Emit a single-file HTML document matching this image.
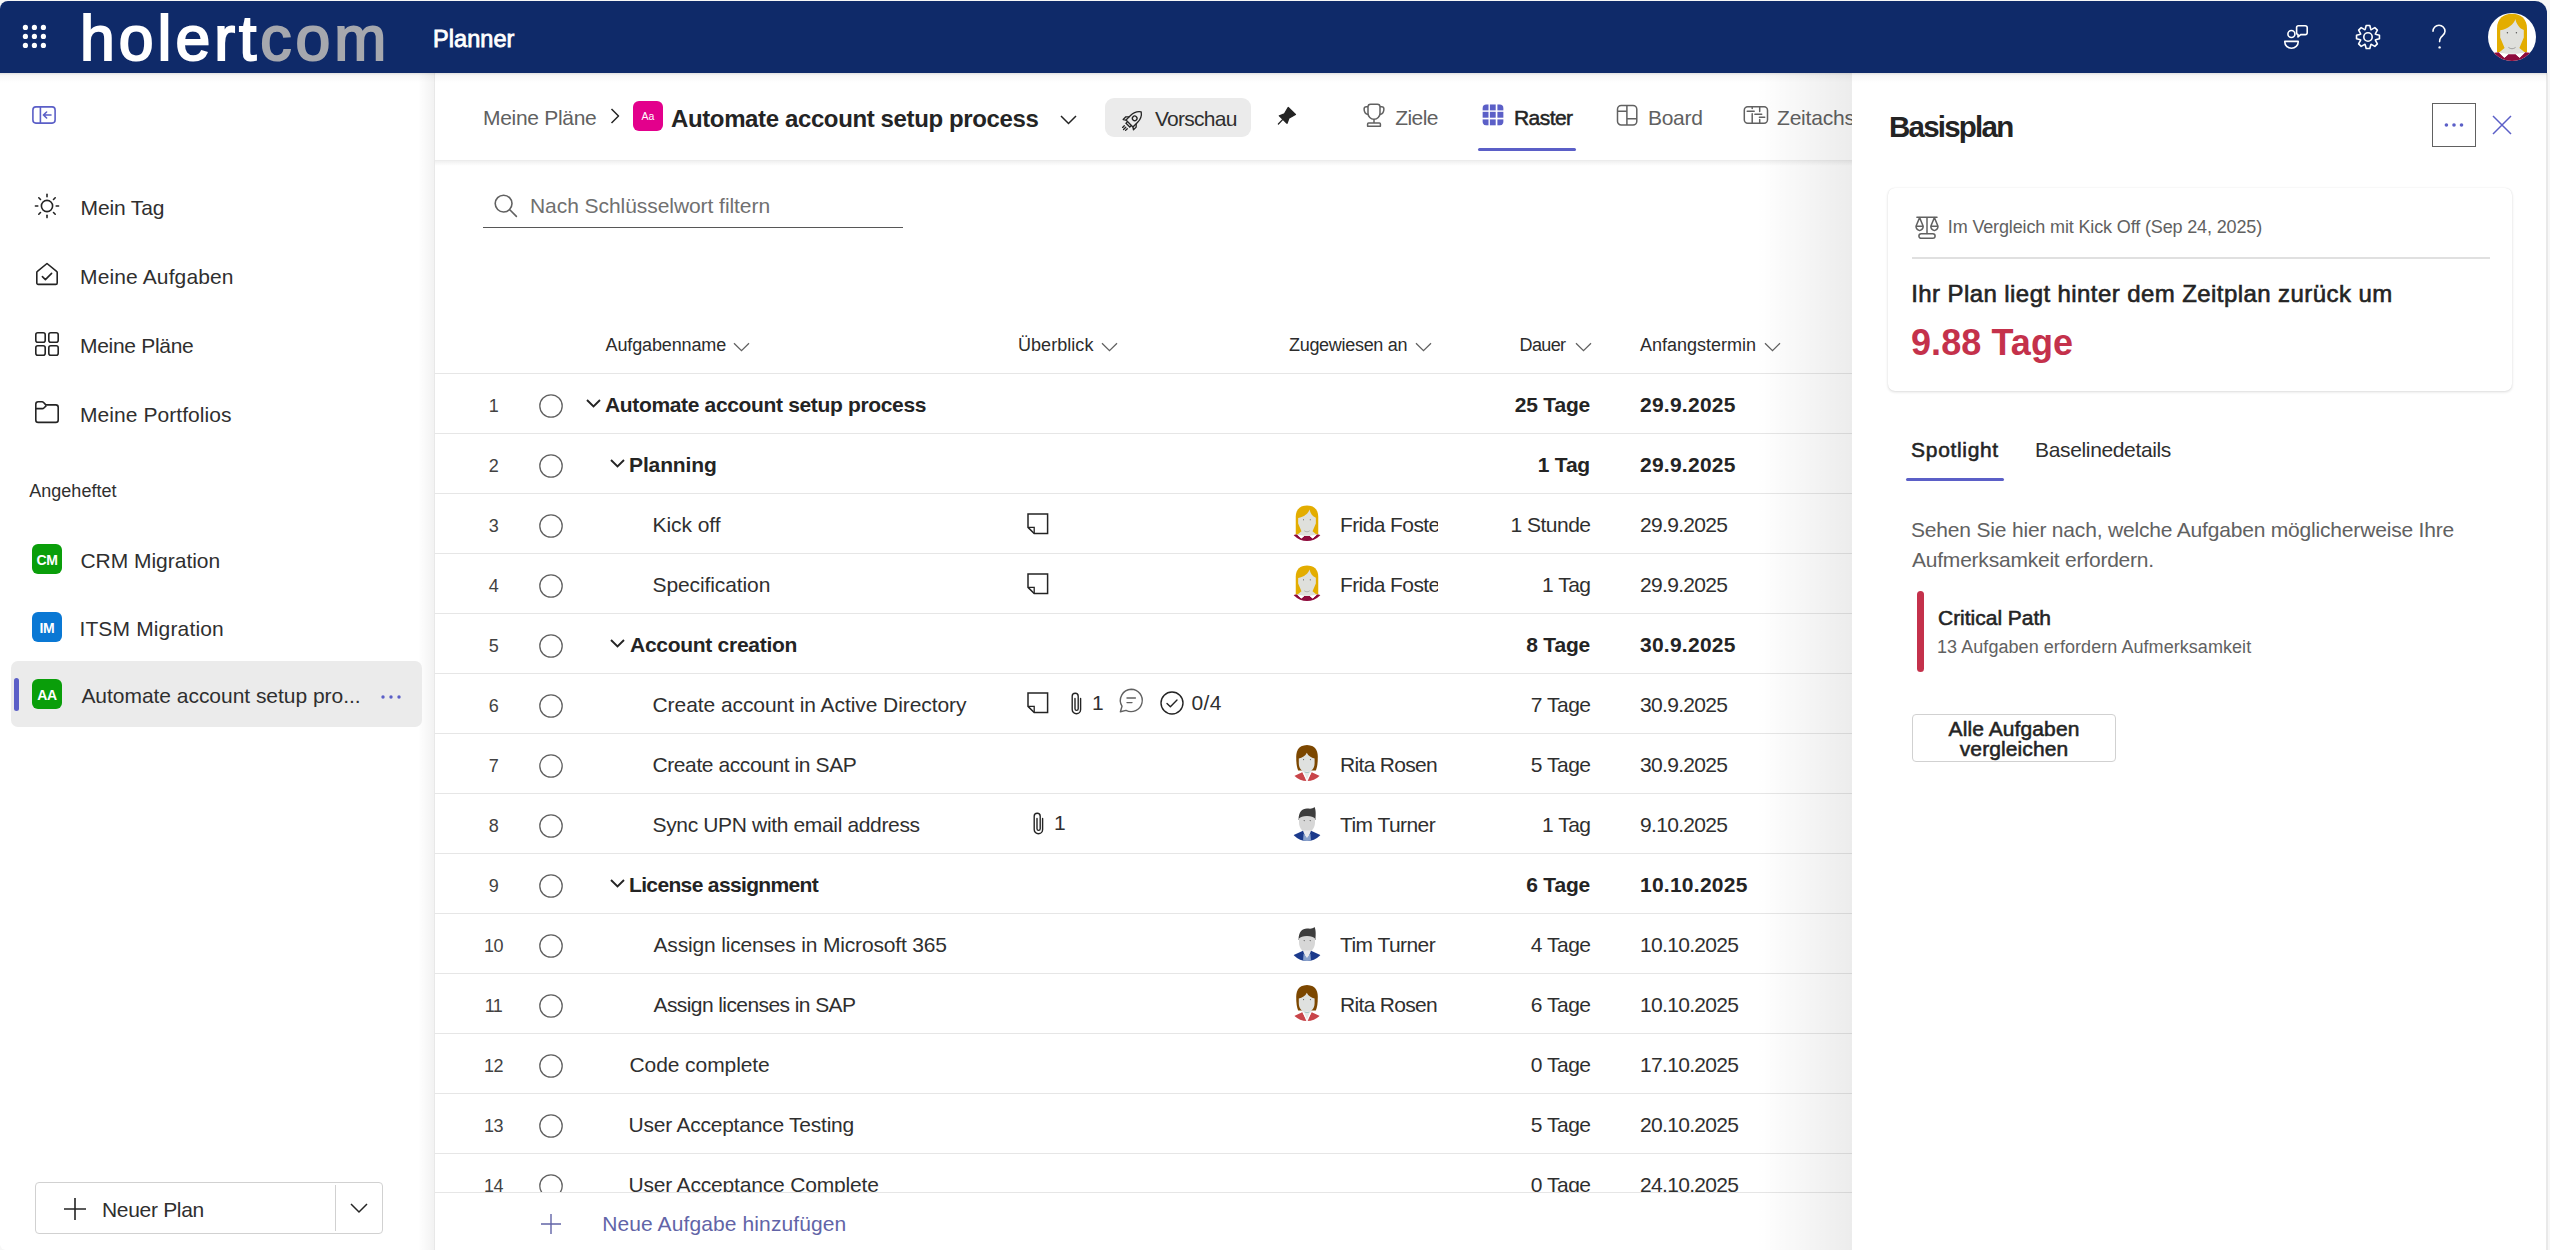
<!DOCTYPE html><html><head><meta charset="utf-8"><title>Planner</title><style>
html,body{margin:0;padding:0;width:2550px;height:1250px;overflow:hidden;background:#f7f7f7;font-family:"Liberation Sans",sans-serif;}
.a{position:absolute;box-sizing:border-box;}
svg.a{overflow:visible;}
.t{position:absolute;white-space:nowrap;line-height:1;}
</style></head><body>
<div class="a" style="left:0px;top:1px;width:2547px;height:1249px;background:#fff;border-radius:8px 12px 10px 6px;"></div>
<div class="a" style="left:0px;top:1px;width:2547px;height:72px;background:#0f2a69;border-radius:8px 12px 0 0;"></div>
<svg class="a" style="left:0px;top:0px;" width="70" height="73" viewBox="0 0 70 73" fill="none"><circle cx="25.4" cy="27.4" r="2.6" fill="#fff"/><circle cx="25.4" cy="36.4" r="2.6" fill="#fff"/><circle cx="25.4" cy="45.4" r="2.6" fill="#fff"/><circle cx="34.4" cy="27.4" r="2.6" fill="#fff"/><circle cx="34.4" cy="36.4" r="2.6" fill="#fff"/><circle cx="34.4" cy="45.4" r="2.6" fill="#fff"/><circle cx="43.4" cy="27.4" r="2.6" fill="#fff"/><circle cx="43.4" cy="36.4" r="2.6" fill="#fff"/><circle cx="43.4" cy="45.4" r="2.6" fill="#fff"/></svg>
<div class="t" id="logo" style="left:80.0px;top:7.1px;font-size:62.5px;font-weight:400;color:#fff;letter-spacing:4.0px;-webkit-text-stroke:2px #fff;">holert<span style="color:#a6a8ae;-webkit-text-stroke:2px #a6a8ae">com</span></div>
<div class="t" id="planner" style="left:433.0px;top:27.6px;font-size:23.5px;font-weight:400;color:#fff;letter-spacing:0.066px;-webkit-text-stroke:0.8px #fff;">Planner</div>
<svg class="a" style="left:2284px;top:25px;" width="24" height="24" viewBox="0 0 24 24" fill="none"><circle cx="7.4" cy="9" r="3.5" stroke="#fff" stroke-width="1.6"/><path d="M0.8 16.4h13.4v0.6a6.7 6.2 0 0 1-13.4 0z" stroke="#fff" stroke-width="1.6" stroke-linejoin="round"/><path d="M14.4 0.8h7a1.8 1.8 0 0 1 1.8 1.8v5.2a1.8 1.8 0 0 1-1.8 1.8h-4.8l-2.6 2.4v-2.4a1.8 1.8 0 0 1-1.4-1.8V2.6a1.8 1.8 0 0 1 1.8-1.8z" stroke="#fff" stroke-width="1.6" stroke-linejoin="round"/></svg>
<svg class="a" style="left:2356px;top:25px;" width="24" height="24" viewBox="0 0 24 24" fill="none"><path d="M9.40 3.49 L10.19 0.54 L13.81 0.54 L14.60 3.49 L15.02 4.70 L16.18 4.14 L18.82 2.62 L21.38 5.18 L19.86 7.82 L19.30 8.98 L20.51 9.40 L23.46 10.19 L23.46 13.81 L20.51 14.60 L19.30 15.02 L19.86 16.18 L21.38 18.82 L18.82 21.38 L16.18 19.86 L15.02 19.30 L14.60 20.51 L13.81 23.46 L10.19 23.46 L9.40 20.51 L8.98 19.30 L7.82 19.86 L5.18 21.38 L2.62 18.82 L4.14 16.18 L4.70 15.02 L3.49 14.60 L0.54 13.81 L0.54 10.19 L3.49 9.40 L4.70 8.98 L4.14 7.82 L2.62 5.18 L5.18 2.62 L7.82 4.14 L8.98 4.70Z" stroke="#fff" stroke-width="1.6" stroke-linejoin="round"/><circle cx="12" cy="12" r="4.2" stroke="#fff" stroke-width="1.6"/></svg>
<svg class="a" style="left:2430px;top:25px;" width="18" height="24" viewBox="0 0 18 24" fill="none"><path d="M3 6.2a6 6 0 0 1 12 0c0 3.2-2.4 4.2-3.8 5.8c-1 1.2-1.6 2.4-1.6 4.6" stroke="#fff" stroke-width="1.6" stroke-linecap="round"/><circle cx="9.6" cy="22.4" r="1.2" fill="#fff"/></svg>
<svg class="a" style="left:2488px;top:13px;" width="48" height="48" viewBox="0 0 48 48" fill="none"><circle cx="24" cy="24" r="24" fill="#fff"/><clipPath id="wa248813"><circle cx="24" cy="24" r="24"/></clipPath><g clip-path="url(#wa248813)"><path d="M9 39.2V15.5C9 6 15 0.8 24 0.8S39 6 39 15.5V39.2z" fill="#e3ad00"/><path d="M27.4 5.9C26 11 20 16 12.2 17.2V24.5L16.6 35L11.4 39.2C16 41.4 32 41.4 36.6 39.2L31.4 35L35.8 24.5V17C31.5 15.4 28.4 11 27.4 5.9z" fill="#dfe0dc"/><path d="M0 48L2 41.6C5 40 8 39.3 10.8 39.3L16.4 44.8L20.3 41.2H27.7L31.6 44.8L37.2 39.3C40 39.3 43 40 46 41.6L48 48z" fill="#8e0b3c"/><path d="M10.8 39.3C14 40.5 17 41 20.3 41.2L16.4 44.8zM37.2 39.3C34 40.5 31 41 27.7 41.2L31.6 44.8z" fill="#fff"/><circle cx="19.4" cy="19.8" r="0.7" fill="#555"/><circle cx="28.4" cy="19.8" r="0.7" fill="#555"/><path d="M20.4 34.4c2.4 1.8 4.8 1.8 7.2 0" stroke="#9a9a9a" stroke-width="0.9"/></g></svg>
<div class="a" style="left:418px;top:73px;width:16px;height:1177px;background:linear-gradient(to right,rgba(0,0,0,0),rgba(0,0,0,0.05));"></div>
<div class="a" style="left:434px;top:73px;width:1px;height:1177px;background:#e8e8e8;"></div>
<svg class="a" style="left:32px;top:106px;" width="24" height="18" viewBox="0 0 24 18" fill="none"><rect x="0.9" y="0.9" width="22.2" height="16.2" rx="3" stroke="#5b5fc7" stroke-width="1.6"/><path d="M8.4 1v16" stroke="#5b5fc7" stroke-width="1.6"/><path d="M19 9h-7.6M14.6 6l-3.2 3l3.2 3" stroke="#5b5fc7" stroke-width="1.6" stroke-linecap="round" stroke-linejoin="round"/></svg>
<svg class="a" style="left:35px;top:194px;" width="24" height="24" viewBox="0 0 24 24" fill="none"><circle cx="12" cy="12" r="5.6" stroke="#242424" stroke-width="1.6"/><path d="M21.20 12.00L23.60 12.00" stroke="#242424" stroke-width="1.6" stroke-linecap="round"/><path d="M18.51 18.51L20.20 20.20" stroke="#242424" stroke-width="1.6" stroke-linecap="round"/><path d="M12.00 21.20L12.00 23.60" stroke="#242424" stroke-width="1.6" stroke-linecap="round"/><path d="M5.49 18.51L3.80 20.20" stroke="#242424" stroke-width="1.6" stroke-linecap="round"/><path d="M2.80 12.00L0.40 12.00" stroke="#242424" stroke-width="1.6" stroke-linecap="round"/><path d="M5.49 5.49L3.80 3.80" stroke="#242424" stroke-width="1.6" stroke-linecap="round"/><path d="M12.00 2.80L12.00 0.40" stroke="#242424" stroke-width="1.6" stroke-linecap="round"/><path d="M18.51 5.49L20.20 3.80" stroke="#242424" stroke-width="1.6" stroke-linecap="round"/></svg>
<svg class="a" style="left:35px;top:262px;" width="24" height="24" viewBox="0 0 24 24" fill="none"><path d="M12 1.5L21.6 9.3c0.4 0.3 0.6 0.8 0.6 1.3V21c0 0.8-0.6 1.4-1.4 1.4H3.2c-0.8 0-1.4-0.6-1.4-1.4V10.6c0-0.5 0.2-1 0.6-1.3z" stroke="#242424" stroke-width="1.6" stroke-linejoin="round"/><path d="M7.4 14.6l3 3l6.2-6.2" stroke="#242424" stroke-width="1.6" stroke-linecap="round" stroke-linejoin="round"/></svg>
<svg class="a" style="left:35px;top:332px;" width="24" height="24" viewBox="0 0 24 24" fill="none"><rect x="0.8" y="0.8" width="9.4" height="9.4" rx="2" stroke="#242424" stroke-width="1.6"/><rect x="0.8" y="13.8" width="9.4" height="9.4" rx="2" stroke="#242424" stroke-width="1.6"/><rect x="13.8" y="0.8" width="9.4" height="9.4" rx="2" stroke="#242424" stroke-width="1.6"/><rect x="13.8" y="13.8" width="9.4" height="9.4" rx="2" stroke="#242424" stroke-width="1.6"/></svg>
<svg class="a" style="left:35px;top:401px;" width="24" height="22" viewBox="0 0 24 22" fill="none"><path d="M0.8 3.2c0-1.3 1-2.4 2.4-2.4h3.8c0.6 0 1.2 0.3 1.6 0.7l2.2 2.4h10c1.3 0 2.4 1 2.4 2.4V19c0 1.3-1 2.4-2.4 2.4H3.2c-1.3 0-2.4-1-2.4-2.4z" stroke="#242424" stroke-width="1.6" stroke-linejoin="round"/><path d="M0.8 7.6h6.6c0.6 0 1.1-0.2 1.5-0.6l2.4-2.4" stroke="#242424" stroke-width="1.6" stroke-linejoin="round"/></svg>
<div class="t" id="s1" style="left:80.6px;top:197.2px;font-size:21px;font-weight:400;color:#2f2f2f;letter-spacing:-0.151px;">Mein Tag</div>
<div class="t" id="s2" style="left:80.0px;top:266.2px;font-size:21px;font-weight:400;color:#2f2f2f;letter-spacing:0.134px;">Meine Aufgaben</div>
<div class="t" id="s3" style="left:80.0px;top:335.2px;font-size:21px;font-weight:400;color:#2f2f2f;letter-spacing:-0.3px;">Meine Pläne</div>
<div class="t" id="s4" style="left:80.0px;top:404.2px;font-size:21px;font-weight:400;color:#2f2f2f;letter-spacing:0.067px;">Meine Portfolios</div>
<div class="t" id="s5" style="left:29.2px;top:481.8px;font-size:18px;font-weight:400;color:#2f2f2f;letter-spacing:0.029px;">Angeheftet</div>
<div class="a" style="left:11px;top:661px;width:411px;height:66px;background:#ebebeb;border-radius:7px;"></div>
<div class="a" style="left:14px;top:678px;width:5px;height:33px;background:#5b5fc7;border-radius:3px;"></div>
<div class="a" style="left:32px;top:544px;width:30px;height:30px;background:#0a9e0a;border-radius:6px;"></div>
<div class="t" style="left:-53.0px;width:200px;text-align:center;top:552.6px;font-size:14px;font-weight:700;color:#fff;letter-spacing:-0.3px;">CM</div>
<div class="a" style="left:32px;top:612px;width:30px;height:30px;background:#0a78d4;border-radius:6px;"></div>
<div class="t" style="left:-53.0px;width:200px;text-align:center;top:620.6px;font-size:14px;font-weight:700;color:#fff;letter-spacing:-0.3px;">IM</div>
<div class="a" style="left:32px;top:679px;width:30px;height:30px;background:#0a9e0a;border-radius:6px;"></div>
<div class="t" style="left:-53.0px;width:200px;text-align:center;top:687.6px;font-size:14px;font-weight:700;color:#fff;letter-spacing:-0.3px;">AA</div>
<div class="t" id="s6" style="left:80.4px;top:550.2px;font-size:21px;font-weight:400;color:#2f2f2f;letter-spacing:-0.017px;">CRM Migration</div>
<div class="t" id="s7" style="left:79.4px;top:617.7px;font-size:21px;font-weight:400;color:#2f2f2f;letter-spacing:0.154px;">ITSM Migration</div>
<div class="t" id="s8" style="left:81.4px;top:685.2px;font-size:21px;font-weight:400;color:#2f2f2f;letter-spacing:-0.035px;">Automate account setup pro...</div>
<svg class="a" style="left:380px;top:692px;" width="24" height="10" viewBox="0 0 24 10" fill="none"><circle cx="3" cy="5" r="1.7" fill="#5b5fc7"/><circle cx="11" cy="5" r="1.7" fill="#5b5fc7"/><circle cx="19" cy="5" r="1.7" fill="#5b5fc7"/></svg>
<div class="a" style="left:35px;top:1182px;width:348px;height:52px;border:1px solid #d1d1d1;border-radius:4px;background:#fff;"></div>
<div class="a" style="left:335px;top:1185px;width:1px;height:46px;background:#d1d1d1;"></div>
<svg class="a" style="left:63px;top:1197px;" width="24" height="24" viewBox="0 0 24 24" fill="none"><path d="M12 1v22M1 12h22" stroke="#242424" stroke-width="1.6"/></svg>
<div class="t" id="s9" style="left:102.0px;top:1199.2px;font-size:21px;font-weight:400;color:#2f2f2f;letter-spacing:-0.312px;">Neuer Plan</div>
<svg class="a" style="left:350px;top:1203px;" width="18" height="10" viewBox="0 0 18 10" fill="none"><path d="M1 1l8 8l8-8" stroke="#242424" stroke-width="1.5"/></svg>
<div class="a" style="left:435px;top:160px;width:1417px;height:6px;background:linear-gradient(to bottom,rgba(0,0,0,0.07),rgba(0,0,0,0));"></div>
<div class="a" style="left:435px;top:160px;width:1417px;height:1px;background:#ececec;"></div>
<div class="t" id="bc1" style="left:483.0px;top:106.9px;font-size:21px;font-weight:400;color:#616161;letter-spacing:-0.3px;">Meine Pläne</div>
<svg class="a" style="left:610px;top:108px;" width="10" height="16" viewBox="0 0 10 16" fill="none"><path d="M1.5 1l7 7l-7 7" stroke="#242424" stroke-width="1.5" stroke-linejoin="round"/></svg>
<div class="a" style="left:633px;top:101px;width:30px;height:30px;background:#e3008c;border-radius:6px;"></div>
<div class="t" style="left:548.0px;width:200px;text-align:center;top:111.1px;font-size:10.5px;font-weight:400;color:#fff;">Aa</div>
<div class="t" id="bc2" style="left:671.0px;top:106.7px;font-size:24px;font-weight:700;color:#242424;letter-spacing:-0.378px;">Automate account setup process</div>
<svg class="a" style="left:1060px;top:115px;" width="17" height="10" viewBox="0 0 17 10" fill="none"><path d="M1 1l7.5 7.5l7.5-7.5" stroke="#242424" stroke-width="1.5"/></svg>
<div class="a" style="left:1105px;top:98px;width:146px;height:39px;background:#ebebeb;border-radius:9px;"></div>
<svg class="a" style="left:1119px;top:107px;" width="27" height="27" viewBox="0 0 27 27" fill="none"><g transform="rotate(45 13.5 13.5)"><path d="M8.6 17.8V11.4C8.6 6.6 10.6 3.2 13.5 1.2C16.4 3.2 18.4 6.6 18.4 11.4V17.8z" stroke="#242424" stroke-width="1.3" stroke-linejoin="round"/><circle cx="13.5" cy="10.4" r="2.3" stroke="#242424" stroke-width="1.3"/><path d="M8.6 13.2L6.2 15.6V19.4L8.6 17.8M18.4 13.2L20.8 15.6V19.4L18.4 17.8" stroke="#242424" stroke-width="1.3" stroke-linejoin="round"/><path d="M10.8 17.8v2.2h5.4v-2.2" stroke="#242424" stroke-width="1.3"/><path d="M11.4 23v2.4M13.5 23v3.2M15.6 23v2.4" stroke="#242424" stroke-width="1.3" stroke-linecap="round"/></g></svg>
<div class="t" id="bc3" style="left:1155.0px;top:108.2px;font-size:21px;font-weight:400;color:#2f2f2f;letter-spacing:-0.743px;">Vorschau</div>
<svg class="a" style="left:1276px;top:106px;" width="22" height="20" viewBox="0 0 22 20" fill="none"><path d="M12.2 1.6L19.4 8.4L12.8 12.2L11 17.2L3.4 9.8L8.4 8z" fill="#242424" stroke="#242424" stroke-width="1.4" stroke-linejoin="round"/><path d="M6.6 13.6L2.4 18" stroke="#242424" stroke-width="1.3" stroke-linecap="round"/></svg>
<svg class="a" style="left:1363px;top:103px;" width="22" height="24" viewBox="0 0 22 24" fill="none"><path d="M7.6 1.2h6.8a2.6 2.6 0 0 1 2.6 2.6v6.4a6 6 0 0 1-12 0V3.8a2.6 2.6 0 0 1 2.6-2.6z" stroke="#616161" stroke-width="1.5"/><path d="M5 3.8H3.4c-1.4 0-2.3 0.8-2.3 2.2c0 3 1.4 5 3.9 5.6M17 3.8h1.6c1.4 0 2.3 0.8 2.3 2.2c0 3-1.4 5-3.9 5.6" stroke="#616161" stroke-width="1.5"/><path d="M11 16.4v3.6" stroke="#616161" stroke-width="1.5"/><path d="M5.6 20h10.8c0.6 0 1 0.4 1 1v2.2H4.6V21c0-0.6 0.4-1 1-1z" stroke="#616161" stroke-width="1.5" stroke-linejoin="round"/></svg>
<div class="t" id="tb1" style="left:1395.2px;top:106.5px;font-size:21px;font-weight:400;color:#616161;letter-spacing:-0.55px;">Ziele</div>
<svg class="a" style="left:1482px;top:104px;" width="22" height="22" viewBox="0 0 22 22" fill="none"><clipPath id="rgc"><rect x="0.4" y="0.3" width="21.2" height="21.3" rx="4.2"/></clipPath><g clip-path="url(#rgc)"><rect x="0.4" y="0.3" width="6.1" height="6.1" fill="#5b5fc7"/><rect x="0.4" y="7.8" width="6.1" height="5.9" fill="#5b5fc7"/><rect x="0.4" y="15.4" width="6.1" height="6.2" fill="#5b5fc7"/><rect x="7.9" y="0.3" width="5.8" height="6.1" fill="#5b5fc7"/><rect x="7.9" y="7.8" width="5.8" height="5.9" fill="#5b5fc7"/><rect x="7.9" y="15.4" width="5.8" height="6.2" fill="#5b5fc7"/><rect x="15.4" y="0.3" width="6.2" height="6.1" fill="#5b5fc7"/><rect x="15.4" y="7.8" width="6.2" height="5.9" fill="#5b5fc7"/><rect x="15.4" y="15.4" width="6.2" height="6.2" fill="#5b5fc7"/></g></svg>
<div class="t" id="tb2" style="left:1514.0px;top:106.5px;font-size:21px;font-weight:700;color:#242424;letter-spacing:-0.55px;font-weight:400;-webkit-text-stroke:0.5px #242424;">Raster</div>
<div class="a" style="left:1478px;top:148px;width:98px;height:3px;background:#5b5fc7;border-radius:1.5px;"></div>
<svg class="a" style="left:1616px;top:104px;" width="22" height="22" viewBox="0 0 22 22" fill="none"><rect x="1.5" y="1.4" width="19.3" height="19.6" rx="3.8" stroke="#616161" stroke-width="1.5"/><path d="M10.9 1.4V21M1.5 7.3H10.9M10.9 14.7H20.8" stroke="#616161" stroke-width="1.5"/></svg>
<div class="t" id="tb3" style="left:1648.0px;top:106.5px;font-size:21px;font-weight:400;color:#616161;letter-spacing:-0.3px;">Board</div>
<svg class="a" style="left:1743px;top:106px;" width="26" height="18" viewBox="0 0 26 18" fill="none"><rect x="1.3" y="0.8" width="23.2" height="16.4" rx="3.4" stroke="#616161" stroke-width="1.5"/><path d="M9.2 1V2.6M9.2 7.8V17M4.2 5.2H11.2M16.7 1V5.5M16.7 13.6V17M11.9 8.3H18.7M16.4 11.2H21.7" stroke="#616161" stroke-width="1.5" stroke-linecap="round"/></svg>
<div class="a" style="left:1777px;top:100px;width:75px;height:40px;overflow:hidden;">
<div class="t" style="left:0.0px;top:6.5px;font-size:21px;font-weight:400;color:#616161;letter-spacing:-0.2px;">Zeitachse</div>
</div>
<svg class="a" style="left:494px;top:194px;" width="24" height="23" viewBox="0 0 24 23" fill="none"><circle cx="9.6" cy="9.6" r="8.4" stroke="#616161" stroke-width="1.6"/><path d="M15.8 15.8l6.6 6.6" stroke="#616161" stroke-width="1.6" stroke-linecap="round"/></svg>
<div class="t" id="srch" style="left:530.0px;top:195.2px;font-size:21px;font-weight:400;color:#707070;letter-spacing:-0.06px;">Nach Schlüsselwort filtern</div>
<div class="a" style="left:483px;top:227px;width:420px;height:1.2px;background:#575757;"></div>
<div class="t" id="h1" style="left:605.6px;top:336.0px;font-size:18px;font-weight:400;color:#2c2c2c;letter-spacing:-0.135px;">Aufgabenname</div>
<svg class="a" style="left:733px;top:342px;" width="17" height="10" viewBox="0 0 17 10" fill="none"><path d="M1 1.2l7.5 7.5l7.5-7.5" stroke="#616161" stroke-width="1.3"/></svg>
<div class="t" id="h2" style="left:1018.0px;top:336.0px;font-size:18px;font-weight:400;color:#2c2c2c;letter-spacing:0.05px;">Überblick</div>
<svg class="a" style="left:1101px;top:342px;" width="17" height="10" viewBox="0 0 17 10" fill="none"><path d="M1 1.2l7.5 7.5l7.5-7.5" stroke="#616161" stroke-width="1.3"/></svg>
<div class="t" id="h3" style="left:1289.0px;top:336.0px;font-size:18px;font-weight:400;color:#2c2c2c;letter-spacing:-0.301px;">Zugewiesen an</div>
<svg class="a" style="left:1415px;top:342px;" width="17" height="10" viewBox="0 0 17 10" fill="none"><path d="M1 1.2l7.5 7.5l7.5-7.5" stroke="#616161" stroke-width="1.3"/></svg>
<div class="t" id="h4" style="left:1519.6px;top:336.0px;font-size:18px;font-weight:400;color:#2c2c2c;letter-spacing:-0.65px;">Dauer</div>
<svg class="a" style="left:1575px;top:342px;" width="17" height="10" viewBox="0 0 17 10" fill="none"><path d="M1 1.2l7.5 7.5l7.5-7.5" stroke="#616161" stroke-width="1.3"/></svg>
<div class="t" id="h5" style="left:1640.0px;top:336.0px;font-size:18px;font-weight:400;color:#2c2c2c;">Anfangstermin</div>
<svg class="a" style="left:1764px;top:342px;" width="17" height="10" viewBox="0 0 17 10" fill="none"><path d="M1 1.2l7.5 7.5l7.5-7.5" stroke="#616161" stroke-width="1.3"/></svg>
<div class="a" style="left:435px;top:373px;width:1417px;height:1px;background:#e6e6e6;"></div>
<div class="a" style="left:435px;top:433px;width:1417px;height:1px;background:#e6e6e6;"></div>
<div class="a" style="left:435px;top:493px;width:1417px;height:1px;background:#e6e6e6;"></div>
<div class="a" style="left:435px;top:553px;width:1417px;height:1px;background:#e6e6e6;"></div>
<div class="a" style="left:435px;top:613px;width:1417px;height:1px;background:#e6e6e6;"></div>
<div class="a" style="left:435px;top:673px;width:1417px;height:1px;background:#e6e6e6;"></div>
<div class="a" style="left:435px;top:733px;width:1417px;height:1px;background:#e6e6e6;"></div>
<div class="a" style="left:435px;top:793px;width:1417px;height:1px;background:#e6e6e6;"></div>
<div class="a" style="left:435px;top:853px;width:1417px;height:1px;background:#e6e6e6;"></div>
<div class="a" style="left:435px;top:913px;width:1417px;height:1px;background:#e6e6e6;"></div>
<div class="a" style="left:435px;top:973px;width:1417px;height:1px;background:#e6e6e6;"></div>
<div class="a" style="left:435px;top:1033px;width:1417px;height:1px;background:#e6e6e6;"></div>
<div class="a" style="left:435px;top:1093px;width:1417px;height:1px;background:#e6e6e6;"></div>
<div class="a" style="left:435px;top:1153px;width:1417px;height:1px;background:#e6e6e6;"></div>
<div class="a" style="left:435px;top:1192px;width:1417px;height:1px;background:#e6e6e6;"></div>
<div class="a" style="left:435px;top:374px;width:1417px;height:818px;overflow:hidden;">
<div class="t" style="left:-41.5px;width:200px;text-align:center;top:22.5px;font-size:18px;font-weight:400;color:#424242;letter-spacing:-0.6px;">1</div>
<svg class="a" style="left:104px;top:20.0px;" width="24" height="24" viewBox="0 0 24 24" fill="none"><circle cx="12" cy="12" r="11.2" stroke="#616161" stroke-width="1.3"/></svg>
<svg class="a" style="left:151px;top:24.5px;" width="15" height="9" viewBox="0 0 15 9" fill="none"><path d="M1 1l6.5 6.5l6.5-6.5" stroke="#242424" stroke-width="1.9"/></svg>
<div class="t" id="r1" style="left:170.0px;top:19.9px;font-size:21px;font-weight:700;color:#242424;letter-spacing:-0.343px;">Automate account setup process</div>
<div class="t" style="right:262.0px;top:19.9px;font-size:21px;font-weight:700;color:#242424;letter-spacing:-0.2px;">25 Tage</div>
<div class="t" style="left:1205.0px;top:19.9px;font-size:21px;font-weight:700;color:#242424;letter-spacing:0.25px;">29.9.2025</div>
<div class="t" style="left:-41.5px;width:200px;text-align:center;top:82.5px;font-size:18px;font-weight:400;color:#424242;letter-spacing:-0.6px;">2</div>
<svg class="a" style="left:104px;top:80.0px;" width="24" height="24" viewBox="0 0 24 24" fill="none"><circle cx="12" cy="12" r="11.2" stroke="#616161" stroke-width="1.3"/></svg>
<svg class="a" style="left:175px;top:84.5px;" width="15" height="9" viewBox="0 0 15 9" fill="none"><path d="M1 1l6.5 6.5l6.5-6.5" stroke="#242424" stroke-width="1.9"/></svg>
<div class="t" id="r2" style="left:194.0px;top:79.9px;font-size:21px;font-weight:700;color:#242424;letter-spacing:-0.129px;">Planning</div>
<div class="t" style="right:262.0px;top:79.9px;font-size:21px;font-weight:700;color:#242424;letter-spacing:-0.2px;">1 Tag</div>
<div class="t" style="left:1205.0px;top:79.9px;font-size:21px;font-weight:700;color:#242424;letter-spacing:0.25px;">29.9.2025</div>
<div class="t" style="left:-41.5px;width:200px;text-align:center;top:142.5px;font-size:18px;font-weight:400;color:#424242;letter-spacing:-0.6px;">3</div>
<svg class="a" style="left:104px;top:140.0px;" width="24" height="24" viewBox="0 0 24 24" fill="none"><circle cx="12" cy="12" r="11.2" stroke="#616161" stroke-width="1.3"/></svg>
<div class="t" id="r3" style="left:217.5px;top:139.9px;font-size:21px;font-weight:400;color:#2f2f2f;letter-spacing:-0.071px;">Kick off</div>
<div class="t" style="right:261.5px;top:139.9px;font-size:21px;font-weight:400;color:#2f2f2f;letter-spacing:-0.5px;">1 Stunde</div>
<div class="t" style="left:1205.0px;top:139.9px;font-size:21px;font-weight:400;color:#2f2f2f;letter-spacing:-0.68px;">29.9.2025</div>
<svg class="a" style="left:592px;top:138.5px;" width="22" height="22" viewBox="0 0 22 22" fill="none"><path d="M1 1H20.6V20.6H7.2L1 14.4z" stroke="#242424" stroke-width="1.5" stroke-linejoin="miter"/><path d="M1.4 14.4H7.2V20.2" stroke="#242424" stroke-width="1.3"/></svg>
<svg class="a" style="left:854px;top:131.0px;" width="36" height="36" viewBox="0 0 36 36" fill="none"><clipPath id="av854131.0"><circle cx="18" cy="18" r="18"/></clipPath><g clip-path="url(#av854131.0)"><g transform="scale(0.75)"><path d="M9 39.2V15.5C9 6 15 0.8 24 0.8S39 6 39 15.5V39.2z" fill="#e3ad00"/><path d="M27.4 5.9C26 11 20 16 12.2 17.2V24.5L16.6 35L11.4 39.2C16 41.4 32 41.4 36.6 39.2L31.4 35L35.8 24.5V17C31.5 15.4 28.4 11 27.4 5.9z" fill="#dfe0dc"/><path d="M0 48L2 41.6C5 40 8 39.3 10.8 39.3L16.4 44.8L20.3 41.2H27.7L31.6 44.8L37.2 39.3C40 39.3 43 40 46 41.6L48 48z" fill="#8e0b3c"/><path d="M10.8 39.3C14 40.5 17 41 20.3 41.2L16.4 44.8zM37.2 39.3C34 40.5 31 41 27.7 41.2L31.6 44.8z" fill="#fff"/><circle cx="19.4" cy="19.8" r="0.7" fill="#555"/><circle cx="28.4" cy="19.8" r="0.7" fill="#555"/><path d="M20.4 34.4c2.4 1.8 4.8 1.8 7.2 0" stroke="#9a9a9a" stroke-width="0.9"/></g></g></svg>
<div class="a" style="left:905px;top:129.5px;width:98px;height:40px;overflow:hidden;">
<div class="t" id="a3" style="left:0.0px;top:10.4px;font-size:21px;font-weight:400;color:#2f2f2f;letter-spacing:-0.6px;">Frida Foster</div>
</div>
<div class="t" style="left:-41.5px;width:200px;text-align:center;top:202.5px;font-size:18px;font-weight:400;color:#424242;letter-spacing:-0.6px;">4</div>
<svg class="a" style="left:104px;top:200.0px;" width="24" height="24" viewBox="0 0 24 24" fill="none"><circle cx="12" cy="12" r="11.2" stroke="#616161" stroke-width="1.3"/></svg>
<div class="t" id="r4" style="left:217.5px;top:199.9px;font-size:21px;font-weight:400;color:#2f2f2f;letter-spacing:-0.1px;">Specification</div>
<div class="t" style="right:261.5px;top:199.9px;font-size:21px;font-weight:400;color:#2f2f2f;letter-spacing:-0.5px;">1 Tag</div>
<div class="t" style="left:1205.0px;top:199.9px;font-size:21px;font-weight:400;color:#2f2f2f;letter-spacing:-0.68px;">29.9.2025</div>
<svg class="a" style="left:592px;top:198.5px;" width="22" height="22" viewBox="0 0 22 22" fill="none"><path d="M1 1H20.6V20.6H7.2L1 14.4z" stroke="#242424" stroke-width="1.5" stroke-linejoin="miter"/><path d="M1.4 14.4H7.2V20.2" stroke="#242424" stroke-width="1.3"/></svg>
<svg class="a" style="left:854px;top:191.0px;" width="36" height="36" viewBox="0 0 36 36" fill="none"><clipPath id="av854191.0"><circle cx="18" cy="18" r="18"/></clipPath><g clip-path="url(#av854191.0)"><g transform="scale(0.75)"><path d="M9 39.2V15.5C9 6 15 0.8 24 0.8S39 6 39 15.5V39.2z" fill="#e3ad00"/><path d="M27.4 5.9C26 11 20 16 12.2 17.2V24.5L16.6 35L11.4 39.2C16 41.4 32 41.4 36.6 39.2L31.4 35L35.8 24.5V17C31.5 15.4 28.4 11 27.4 5.9z" fill="#dfe0dc"/><path d="M0 48L2 41.6C5 40 8 39.3 10.8 39.3L16.4 44.8L20.3 41.2H27.7L31.6 44.8L37.2 39.3C40 39.3 43 40 46 41.6L48 48z" fill="#8e0b3c"/><path d="M10.8 39.3C14 40.5 17 41 20.3 41.2L16.4 44.8zM37.2 39.3C34 40.5 31 41 27.7 41.2L31.6 44.8z" fill="#fff"/><circle cx="19.4" cy="19.8" r="0.7" fill="#555"/><circle cx="28.4" cy="19.8" r="0.7" fill="#555"/><path d="M20.4 34.4c2.4 1.8 4.8 1.8 7.2 0" stroke="#9a9a9a" stroke-width="0.9"/></g></g></svg>
<div class="a" style="left:905px;top:189.5px;width:98px;height:40px;overflow:hidden;">
<div class="t" id="a4" style="left:0.0px;top:10.4px;font-size:21px;font-weight:400;color:#2f2f2f;letter-spacing:-0.6px;">Frida Foster</div>
</div>
<div class="t" style="left:-41.5px;width:200px;text-align:center;top:262.5px;font-size:18px;font-weight:400;color:#424242;letter-spacing:-0.6px;">5</div>
<svg class="a" style="left:104px;top:260.0px;" width="24" height="24" viewBox="0 0 24 24" fill="none"><circle cx="12" cy="12" r="11.2" stroke="#616161" stroke-width="1.3"/></svg>
<svg class="a" style="left:175px;top:264.5px;" width="15" height="9" viewBox="0 0 15 9" fill="none"><path d="M1 1l6.5 6.5l6.5-6.5" stroke="#242424" stroke-width="1.9"/></svg>
<div class="t" id="r5" style="left:195.0px;top:259.9px;font-size:21px;font-weight:700;color:#242424;letter-spacing:-0.278px;">Account creation</div>
<div class="t" style="right:262.0px;top:259.9px;font-size:21px;font-weight:700;color:#242424;letter-spacing:-0.2px;">8 Tage</div>
<div class="t" style="left:1205.0px;top:259.9px;font-size:21px;font-weight:700;color:#242424;letter-spacing:0.25px;">30.9.2025</div>
<div class="t" style="left:-41.5px;width:200px;text-align:center;top:322.5px;font-size:18px;font-weight:400;color:#424242;letter-spacing:-0.6px;">6</div>
<svg class="a" style="left:104px;top:320.0px;" width="24" height="24" viewBox="0 0 24 24" fill="none"><circle cx="12" cy="12" r="11.2" stroke="#616161" stroke-width="1.3"/></svg>
<div class="t" id="r6" style="left:217.5px;top:319.9px;font-size:21px;font-weight:400;color:#2f2f2f;letter-spacing:-0.07px;">Create account in Active Directory</div>
<div class="t" style="right:261.5px;top:319.9px;font-size:21px;font-weight:400;color:#2f2f2f;letter-spacing:-0.5px;">7 Tage</div>
<div class="t" style="left:1205.0px;top:319.9px;font-size:21px;font-weight:400;color:#2f2f2f;letter-spacing:-0.68px;">30.9.2025</div>
<svg class="a" style="left:592px;top:318.0px;" width="22" height="22" viewBox="0 0 22 22" fill="none"><path d="M1 1H20.6V20.6H7.2L1 14.4z" stroke="#242424" stroke-width="1.5" stroke-linejoin="miter"/><path d="M1.4 14.4H7.2V20.2" stroke="#242424" stroke-width="1.3"/></svg>
<svg class="a" style="left:635px;top:317.0px;" width="13" height="25" viewBox="0 0 13 25" fill="none"><path d="M10.6 7.4v11.2a4.2 4.2 0 0 1-8.4 0V5.2a3 3 0 0 1 6 0v12.6a1.6 1.6 0 0 1-3.2 0V7.4" stroke="#242424" stroke-width="1.4" stroke-linecap="round"/></svg>
<div class="t" style="left:657.0px;top:318.4px;font-size:21px;font-weight:400;color:#2f2f2f;">1</div>
<svg class="a" style="left:683px;top:313.5px;" width="26" height="26" viewBox="0 0 26 26" fill="none"><path d="M13.2 1.2a11.2 11.2 0 1 1-5.2 21.2l-5.6 1.4l1.6-5.6A11.2 11.2 0 0 1 13.2 1.2z" stroke="#616161" stroke-width="1.4" stroke-linejoin="round"/><path d="M9 10h8.4M9 14.6h5" stroke="#616161" stroke-width="1.4" stroke-linecap="round"/></svg>
<svg class="a" style="left:724.5px;top:317.0px;" width="24" height="24" viewBox="0 0 24 24" fill="none"><circle cx="12" cy="12" r="11" stroke="#242424" stroke-width="1.4"/><path d="M7 12.4l3.4 3.4l6.6-6.8" stroke="#242424" stroke-width="1.4" stroke-linecap="round" stroke-linejoin="round"/></svg>
<div class="t" style="left:756.5px;top:318.4px;font-size:21px;font-weight:400;color:#2f2f2f;letter-spacing:0.4px;">0/4</div>
<div class="t" style="left:-41.5px;width:200px;text-align:center;top:382.5px;font-size:18px;font-weight:400;color:#424242;letter-spacing:-0.6px;">7</div>
<svg class="a" style="left:104px;top:380.0px;" width="24" height="24" viewBox="0 0 24 24" fill="none"><circle cx="12" cy="12" r="11.2" stroke="#616161" stroke-width="1.3"/></svg>
<div class="t" id="r7" style="left:217.5px;top:379.9px;font-size:21px;font-weight:400;color:#2f2f2f;letter-spacing:-0.41px;">Create account in SAP</div>
<div class="t" style="right:261.5px;top:379.9px;font-size:21px;font-weight:400;color:#2f2f2f;letter-spacing:-0.5px;">5 Tage</div>
<div class="t" style="left:1205.0px;top:379.9px;font-size:21px;font-weight:400;color:#2f2f2f;letter-spacing:-0.68px;">30.9.2025</div>
<svg class="a" style="left:854px;top:371.0px;" width="36" height="36" viewBox="0 0 36 36" fill="none"><clipPath id="av854371.0"><circle cx="18" cy="18" r="18"/></clipPath><g clip-path="url(#av854371.0)"><path d="M7.2 12C7.2 4 11 0 18 0s10.8 4 10.8 12c0 6-0.6 10.6-2 13.4H9.2c-1.4-2.8-2-7.4-2-13.4z" fill="#7c4700"/><path d="M9.8 13.6c3.4-0.8 6.6-2.6 8-5.8c1.4 3.2 4.6 5 7.8 5.8v4.6c0 5.2-3.6 9.2-7.9 9.2s-7.9-4-7.9-9.2z" fill="#dfe1df"/><path d="M13.6 26h8.8v10h-8.8z" fill="#e6e8e6"/><path d="M0 36l2-3.4l11.2-5.4l5 8.8zM36 36l-2-3.4l-11.2-5.4l-5 8.8z" fill="#c9454a"/><path d="M14.4 27.6l3.6 8.4l3.6-8.4" stroke="#fff" stroke-width="1.2"/><circle cx="14.6" cy="14.6" r="0.55" fill="#555"/><circle cx="21.4" cy="14.6" r="0.55" fill="#555"/><path d="M15.6 27c1.5 0.8 3.3 0.8 4.8 0" stroke="#7fb0b0" stroke-width="0.6"/></g></svg>
<div class="a" style="left:905px;top:369.5px;width:98px;height:40px;overflow:hidden;">
<div class="t" id="a7" style="left:0.0px;top:10.4px;font-size:21px;font-weight:400;color:#2f2f2f;letter-spacing:-0.68px;">Rita Rosen</div>
</div>
<div class="t" style="left:-41.5px;width:200px;text-align:center;top:442.5px;font-size:18px;font-weight:400;color:#424242;letter-spacing:-0.6px;">8</div>
<svg class="a" style="left:104px;top:440.0px;" width="24" height="24" viewBox="0 0 24 24" fill="none"><circle cx="12" cy="12" r="11.2" stroke="#616161" stroke-width="1.3"/></svg>
<div class="t" id="r8" style="left:217.5px;top:439.9px;font-size:21px;font-weight:400;color:#2f2f2f;letter-spacing:-0.347px;">Sync UPN with email address</div>
<div class="t" style="right:261.5px;top:439.9px;font-size:21px;font-weight:400;color:#2f2f2f;letter-spacing:-0.5px;">1 Tag</div>
<div class="t" style="left:1205.0px;top:439.9px;font-size:21px;font-weight:400;color:#2f2f2f;letter-spacing:-0.68px;">9.10.2025</div>
<svg class="a" style="left:597px;top:437.0px;" width="13" height="25" viewBox="0 0 13 25" fill="none"><path d="M10.6 7.4v11.2a4.2 4.2 0 0 1-8.4 0V5.2a3 3 0 0 1 6 0v12.6a1.6 1.6 0 0 1-3.2 0V7.4" stroke="#242424" stroke-width="1.4" stroke-linecap="round"/></svg>
<div class="t" style="left:619.0px;top:438.4px;font-size:21px;font-weight:400;color:#2f2f2f;">1</div>
<svg class="a" style="left:854px;top:431.0px;" width="36" height="36" viewBox="0 0 36 36" fill="none"><clipPath id="av854431.0"><circle cx="18" cy="18" r="18"/></clipPath><g clip-path="url(#av854431.0)"><path d="M9.6 15c0-8 3.4-11.4 8.4-11.4c3 0 5.6 0.6 7.6-1.6c1.2 3 1.4 6.2 0.8 13z" fill="#3d3d3d"/><path d="M10 13.6c1.6-1.6 3.8-2.6 8-2.6s6.4 1 8 2.6v3.6c0 6-3.6 10-8 10s-8-4-8-10z" fill="#d7d7d7"/><path d="M13.6 25.4h8.8v10.6h-8.8z" fill="#e8e8ec"/><path d="M0 36l2-4.8l12-5.4l4 10.2zM36 36l-2-4.8l-12-5.4l-4 10.2z" fill="#1b3a8c"/><path d="M14.6 28.6l3.4 4.4l3.4-4.4l0.6 7.4h-8z" fill="#8aa2cc"/><circle cx="15.2" cy="15.6" r="0.55" fill="#555"/><circle cx="21.2" cy="15.6" r="0.55" fill="#555"/></g></svg>
<div class="a" style="left:905px;top:429.5px;width:98px;height:40px;overflow:hidden;">
<div class="t" id="a8" style="left:0.0px;top:10.4px;font-size:21px;font-weight:400;color:#2f2f2f;letter-spacing:-0.56px;">Tim Turner</div>
</div>
<div class="t" style="left:-41.5px;width:200px;text-align:center;top:502.5px;font-size:18px;font-weight:400;color:#424242;letter-spacing:-0.6px;">9</div>
<svg class="a" style="left:104px;top:500.0px;" width="24" height="24" viewBox="0 0 24 24" fill="none"><circle cx="12" cy="12" r="11.2" stroke="#616161" stroke-width="1.3"/></svg>
<svg class="a" style="left:175px;top:504.5px;" width="15" height="9" viewBox="0 0 15 9" fill="none"><path d="M1 1l6.5 6.5l6.5-6.5" stroke="#242424" stroke-width="1.9"/></svg>
<div class="t" id="r9" style="left:194.0px;top:499.9px;font-size:21px;font-weight:700;color:#242424;letter-spacing:-0.648px;">License assignment</div>
<div class="t" style="right:262.0px;top:499.9px;font-size:21px;font-weight:700;color:#242424;letter-spacing:-0.2px;">6 Tage</div>
<div class="t" style="left:1205.0px;top:499.9px;font-size:21px;font-weight:700;color:#242424;letter-spacing:0.25px;">10.10.2025</div>
<div class="t" style="left:-41.5px;width:200px;text-align:center;top:562.5px;font-size:18px;font-weight:400;color:#424242;letter-spacing:-0.6px;">10</div>
<svg class="a" style="left:104px;top:560.0px;" width="24" height="24" viewBox="0 0 24 24" fill="none"><circle cx="12" cy="12" r="11.2" stroke="#616161" stroke-width="1.3"/></svg>
<div class="t" id="r10" style="left:218.5px;top:559.9px;font-size:21px;font-weight:400;color:#2f2f2f;letter-spacing:-0.172px;">Assign licenses in Microsoft 365</div>
<div class="t" style="right:261.5px;top:559.9px;font-size:21px;font-weight:400;color:#2f2f2f;letter-spacing:-0.5px;">4 Tage</div>
<div class="t" style="left:1205.0px;top:559.9px;font-size:21px;font-weight:400;color:#2f2f2f;letter-spacing:-0.68px;">10.10.2025</div>
<svg class="a" style="left:854px;top:551.0px;" width="36" height="36" viewBox="0 0 36 36" fill="none"><clipPath id="av854551.0"><circle cx="18" cy="18" r="18"/></clipPath><g clip-path="url(#av854551.0)"><path d="M9.6 15c0-8 3.4-11.4 8.4-11.4c3 0 5.6 0.6 7.6-1.6c1.2 3 1.4 6.2 0.8 13z" fill="#3d3d3d"/><path d="M10 13.6c1.6-1.6 3.8-2.6 8-2.6s6.4 1 8 2.6v3.6c0 6-3.6 10-8 10s-8-4-8-10z" fill="#d7d7d7"/><path d="M13.6 25.4h8.8v10.6h-8.8z" fill="#e8e8ec"/><path d="M0 36l2-4.8l12-5.4l4 10.2zM36 36l-2-4.8l-12-5.4l-4 10.2z" fill="#1b3a8c"/><path d="M14.6 28.6l3.4 4.4l3.4-4.4l0.6 7.4h-8z" fill="#8aa2cc"/><circle cx="15.2" cy="15.6" r="0.55" fill="#555"/><circle cx="21.2" cy="15.6" r="0.55" fill="#555"/></g></svg>
<div class="a" style="left:905px;top:549.5px;width:98px;height:40px;overflow:hidden;">
<div class="t" id="a10" style="left:0.0px;top:10.4px;font-size:21px;font-weight:400;color:#2f2f2f;letter-spacing:-0.56px;">Tim Turner</div>
</div>
<div class="t" style="left:-41.5px;width:200px;text-align:center;top:622.5px;font-size:18px;font-weight:400;color:#424242;letter-spacing:-0.6px;">11</div>
<svg class="a" style="left:104px;top:620.0px;" width="24" height="24" viewBox="0 0 24 24" fill="none"><circle cx="12" cy="12" r="11.2" stroke="#616161" stroke-width="1.3"/></svg>
<div class="t" id="r11" style="left:218.5px;top:619.9px;font-size:21px;font-weight:400;color:#2f2f2f;letter-spacing:-0.585px;">Assign licenses in SAP</div>
<div class="t" style="right:261.5px;top:619.9px;font-size:21px;font-weight:400;color:#2f2f2f;letter-spacing:-0.5px;">6 Tage</div>
<div class="t" style="left:1205.0px;top:619.9px;font-size:21px;font-weight:400;color:#2f2f2f;letter-spacing:-0.68px;">10.10.2025</div>
<svg class="a" style="left:854px;top:611.0px;" width="36" height="36" viewBox="0 0 36 36" fill="none"><clipPath id="av854611.0"><circle cx="18" cy="18" r="18"/></clipPath><g clip-path="url(#av854611.0)"><path d="M7.2 12C7.2 4 11 0 18 0s10.8 4 10.8 12c0 6-0.6 10.6-2 13.4H9.2c-1.4-2.8-2-7.4-2-13.4z" fill="#7c4700"/><path d="M9.8 13.6c3.4-0.8 6.6-2.6 8-5.8c1.4 3.2 4.6 5 7.8 5.8v4.6c0 5.2-3.6 9.2-7.9 9.2s-7.9-4-7.9-9.2z" fill="#dfe1df"/><path d="M13.6 26h8.8v10h-8.8z" fill="#e6e8e6"/><path d="M0 36l2-3.4l11.2-5.4l5 8.8zM36 36l-2-3.4l-11.2-5.4l-5 8.8z" fill="#c9454a"/><path d="M14.4 27.6l3.6 8.4l3.6-8.4" stroke="#fff" stroke-width="1.2"/><circle cx="14.6" cy="14.6" r="0.55" fill="#555"/><circle cx="21.4" cy="14.6" r="0.55" fill="#555"/><path d="M15.6 27c1.5 0.8 3.3 0.8 4.8 0" stroke="#7fb0b0" stroke-width="0.6"/></g></svg>
<div class="a" style="left:905px;top:609.5px;width:98px;height:40px;overflow:hidden;">
<div class="t" id="a11" style="left:0.0px;top:10.4px;font-size:21px;font-weight:400;color:#2f2f2f;letter-spacing:-0.68px;">Rita Rosen</div>
</div>
<div class="t" style="left:-41.5px;width:200px;text-align:center;top:682.5px;font-size:18px;font-weight:400;color:#424242;letter-spacing:-0.6px;">12</div>
<svg class="a" style="left:104px;top:680.0px;" width="24" height="24" viewBox="0 0 24 24" fill="none"><circle cx="12" cy="12" r="11.2" stroke="#616161" stroke-width="1.3"/></svg>
<div class="t" id="r12" style="left:194.5px;top:679.9px;font-size:21px;font-weight:400;color:#2f2f2f;letter-spacing:-0.083px;">Code complete</div>
<div class="t" style="right:261.5px;top:679.9px;font-size:21px;font-weight:400;color:#2f2f2f;letter-spacing:-0.5px;">0 Tage</div>
<div class="t" style="left:1205.0px;top:679.9px;font-size:21px;font-weight:400;color:#2f2f2f;letter-spacing:-0.68px;">17.10.2025</div>
<div class="t" style="left:-41.5px;width:200px;text-align:center;top:742.5px;font-size:18px;font-weight:400;color:#424242;letter-spacing:-0.6px;">13</div>
<svg class="a" style="left:104px;top:740.0px;" width="24" height="24" viewBox="0 0 24 24" fill="none"><circle cx="12" cy="12" r="11.2" stroke="#616161" stroke-width="1.3"/></svg>
<div class="t" id="r13" style="left:193.5px;top:739.9px;font-size:21px;font-weight:400;color:#2f2f2f;letter-spacing:-0.227px;">User Acceptance Testing</div>
<div class="t" style="right:261.5px;top:739.9px;font-size:21px;font-weight:400;color:#2f2f2f;letter-spacing:-0.5px;">5 Tage</div>
<div class="t" style="left:1205.0px;top:739.9px;font-size:21px;font-weight:400;color:#2f2f2f;letter-spacing:-0.68px;">20.10.2025</div>
<div class="t" style="left:-41.5px;width:200px;text-align:center;top:802.5px;font-size:18px;font-weight:400;color:#424242;letter-spacing:-0.6px;">14</div>
<svg class="a" style="left:104px;top:800.0px;" width="24" height="24" viewBox="0 0 24 24" fill="none"><circle cx="12" cy="12" r="11.2" stroke="#616161" stroke-width="1.3"/></svg>
<div class="t" id="r14" style="left:193.5px;top:799.9px;font-size:21px;font-weight:400;color:#2f2f2f;letter-spacing:-0.178px;">User Acceptance Complete</div>
<div class="t" style="right:261.5px;top:799.9px;font-size:21px;font-weight:400;color:#2f2f2f;letter-spacing:-0.5px;">0 Tage</div>
<div class="t" style="left:1205.0px;top:799.9px;font-size:21px;font-weight:400;color:#2f2f2f;letter-spacing:-0.68px;">24.10.2025</div>
</div>
<svg class="a" style="left:540px;top:1213px;" width="22" height="22" viewBox="0 0 22 22" fill="none"><path d="M11 1v20M1 11h20" stroke="#6264a7" stroke-width="1.4"/></svg>
<div class="t" id="newtask" style="left:602.2px;top:1212.8px;font-size:21px;font-weight:400;color:#6264a7;letter-spacing:0.109px;">Neue Aufgabe hinzufügen</div>
<div class="a" style="left:1757px;top:73px;width:95px;height:1177px;background:linear-gradient(to right,rgba(0,0,0,0),rgba(0,0,0,0.075));"></div>
<div class="a" style="left:1852px;top:73px;width:695px;height:1177px;background:#fff;"></div>
<div class="a" style="left:2546px;top:73px;width:2px;height:1177px;background:#e9e9e9;"></div>
<div class="t" id="bp" style="left:1889.0px;top:111.9px;font-size:29.5px;font-weight:700;color:#242424;letter-spacing:-1.775px;">Basisplan</div>
<div class="a" style="left:2432px;top:103px;width:44px;height:44px;border:1.5px solid #616161;"></div>
<svg class="a" style="left:2440px;top:120px;" width="28" height="10" viewBox="0 0 28 10" fill="none"><circle cx="6.4" cy="5" r="1.8" fill="#5b5fc7"/><circle cx="14" cy="5" r="1.8" fill="#5b5fc7"/><circle cx="21.5" cy="5" r="1.8" fill="#5b5fc7"/></svg>
<svg class="a" style="left:2492px;top:115px;" width="20" height="20" viewBox="0 0 20 20" fill="none"><path d="M1 1l18 18M19 1L1 19" stroke="#5b5fc7" stroke-width="1.5"/></svg>
<div class="a" style="left:1888px;top:188px;width:624px;height:203px;background:#fff;border-radius:7px;box-shadow:0 1px 3px rgba(0,0,0,0.14),0 0 1px rgba(0,0,0,0.10);"></div>
<svg class="a" style="left:1915px;top:216px;" width="24" height="24" viewBox="0 0 24 24" fill="none"><path d="M1.9 1.3H22M12 1.3V17.6" stroke="#616161" stroke-width="1.5" stroke-linecap="round"/><path d="M4.6 1.6L1 10.2c0 2.2 1.6 3.8 3.6 4.4c2-0.6 3.6-2.2 3.6-4.4zM19.4 1.6L15.8 10.2c0 2.2 1.6 3.8 3.6 4.4c2-0.6 3.6-2.2 3.6-4.4zM1.2 10.2h7M15.9 10.2h7" stroke="#616161" stroke-width="1.5" stroke-linejoin="round"/><rect x="3.9" y="17.7" width="16.2" height="4.6" rx="2.3" stroke="#616161" stroke-width="1.5"/></svg>
<div class="t" id="cmp" style="left:1947.8px;top:218.4px;font-size:18px;font-weight:400;color:#616161;letter-spacing:-0.139px;">Im Vergleich mit Kick Off (Sep 24, 2025)</div>
<div class="a" style="left:1912px;top:257px;width:578px;height:2px;background:#e0e0e0;"></div>
<div class="t" id="behind" style="left:1911.2px;top:281.7px;font-size:24px;font-weight:400;color:#242424;letter-spacing:0.421px;-webkit-text-stroke:0.6px #242424;">Ihr Plan liegt hinter dem Zeitplan zurück um</div>
<div class="t" id="days" style="left:1911.0px;top:325.1px;font-size:36px;font-weight:700;color:#c4314b;letter-spacing:0.075px;">9.88 Tage</div>
<div class="t" id="spot" style="left:1911.1px;top:439.0px;font-size:21px;font-weight:400;color:#242424;letter-spacing:0.673px;-webkit-text-stroke:0.55px #242424;">Spotlight</div>
<div class="t" id="bdet" style="left:2035.1px;top:439.0px;font-size:21px;font-weight:400;color:#2f2f2f;letter-spacing:-0.358px;">Baselinedetails</div>
<div class="a" style="left:1906px;top:478px;width:98px;height:3px;background:#5b5fc7;border-radius:1.5px;"></div>
<div class="t" id="seh1" style="left:1911.0px;top:518.7px;font-size:21px;font-weight:400;color:#616161;letter-spacing:-0.184px;">Sehen Sie hier nach, welche Aufgaben möglicherweise Ihre</div>
<div class="t" id="seh2" style="left:1912.0px;top:548.5px;font-size:21px;font-weight:400;color:#616161;letter-spacing:-0.22px;">Aufmerksamkeit erfordern.</div>
<div class="a" style="left:1917px;top:591px;width:7px;height:81px;background:#c4314b;border-radius:3.5px;"></div>
<div class="t" id="crit" style="left:1938.0px;top:606.7px;font-size:21px;font-weight:400;color:#242424;letter-spacing:-0.017px;-webkit-text-stroke:0.55px #242424;">Critical Path</div>
<div class="t" id="crit2" style="left:1937.0px;top:637.7px;font-size:18px;font-weight:400;color:#616161;letter-spacing:0.057px;">13 Aufgaben erfordern Aufmerksamkeit</div>
<div class="a" style="left:1912px;top:714px;width:204px;height:48px;border:1px solid #d1d1d1;border-radius:4px;"></div>
<div class="t" id="btn1" style="left:1914.0px;width:200px;text-align:center;top:717.6px;font-size:21px;font-weight:400;color:#242424;letter-spacing:0.1px;-webkit-text-stroke:0.55px #242424;">Alle Aufgaben</div>
<div class="t" id="btn2" style="left:1914.0px;width:200px;text-align:center;top:737.9px;font-size:21px;font-weight:400;color:#242424;letter-spacing:0.1px;-webkit-text-stroke:0.55px #242424;">vergleichen</div>
<div class="a" style="left:0px;top:73px;width:2547px;height:10px;background:linear-gradient(to bottom,rgba(0,0,0,0.12),rgba(0,0,0,0.035) 25%,rgba(0,0,0,0.01) 70%,rgba(0,0,0,0));"></div>
</body></html>
